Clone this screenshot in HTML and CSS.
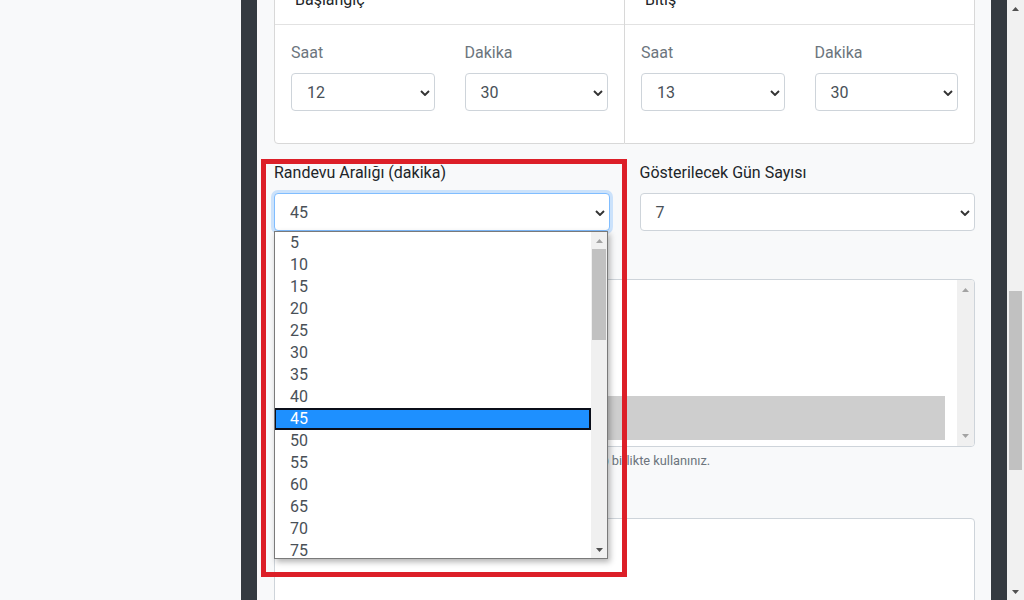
FILE: index.html
```html
<!DOCTYPE html>
<html lang="tr">
<head>
<meta charset="utf-8">
<title>Randevu Ayarları</title>
<link rel="stylesheet" href="styles.css">
</head>
<body>
<div class="app">
  <aside class="side"></aside>
  <div class="rail"></div>
  <main class="main">
    <div class="content">
      <div class="card-group">
        <div class="card">
          <div class="card-header">Başlangıç</div>
          <div class="card-body">
            <div class="row">
              <div class="col group">
                <label class="muted">Saat</label>
                <div class="select"><span>12</span><svg class="chev" width="10" height="6" viewBox="0 0 10 6"><path d="M1 1l4 4 4-4"/></svg></div>
              </div>
              <div class="col group">
                <label class="muted">Dakika</label>
                <div class="select"><span>30</span><svg class="chev" width="10" height="6" viewBox="0 0 10 6"><path d="M1 1l4 4 4-4"/></svg></div>
              </div>
            </div>
          </div>
        </div>
        <div class="card">
          <div class="card-header">Bitiş</div>
          <div class="card-body">
            <div class="row">
              <div class="col group">
                <label class="muted">Saat</label>
                <div class="select"><span>13</span><svg class="chev" width="10" height="6" viewBox="0 0 10 6"><path d="M1 1l4 4 4-4"/></svg></div>
              </div>
              <div class="col group">
                <label class="muted">Dakika</label>
                <div class="select"><span>30</span><svg class="chev" width="10" height="6" viewBox="0 0 10 6"><path d="M1 1l4 4 4-4"/></svg></div>
              </div>
            </div>
          </div>
        </div>
      </div>

      <div class="row wide">
        <div class="col group anchor">
          <label>Randevu Aralığı (dakika)</label>
          <div class="select-wrap">
            <div class="select focus"><span>45</span><svg class="chev" width="10" height="6" viewBox="0 0 10 6"><path d="M1 1l4 4 4-4"/></svg></div>
            <div class="listbox">
              <ul class="options">
                <li>5</li><li>10</li><li>15</li><li>20</li><li>25</li><li>30</li><li>35</li><li>40</li>
                <li class="sel">45</li>
                <li>50</li><li>55</li><li>60</li><li>65</li><li>70</li><li>75</li><li>80</li><li>85</li>
              </ul>
              <div class="lb-scroll">
                <div class="sb-btn"><svg width="7" height="4" viewBox="0 0 7 4"><path class="tri-off" d="M0 4L3.5 0 7 4z"/></svg></div>
                <div class="lb-thumb"></div>
                <div class="sb-fill"></div>
                <div class="sb-btn"><svg width="7" height="4" viewBox="0 0 7 4"><path class="tri-on" d="M0 0h7L3.5 4z"/></svg></div>
              </div>
            </div>
          </div>
          <div class="annot"></div>
        </div>
        <div class="col group">
          <label>Gösterilecek Gün Sayısı</label>
          <div class="select"><span>7</span><svg class="chev" width="10" height="6" viewBox="0 0 10 6"><path d="M1 1l4 4 4-4"/></svg></div>
        </div>
      </div>

      <div class="group">
        <label>Çalışma Günleri</label>
        <div class="multi">
          <ul class="multi-list">
            <li>Pazartesi</li><li>Salı</li><li>Çarşamba</li><li>Perşembe</li><li>Cuma</li>
            <li class="picked">Cumartesi</li><li class="picked">Pazar</li>
          </ul>
          <div class="ms-scroll">
            <svg width="7" height="4" viewBox="0 0 7 4"><path class="tri-off" d="M0 4L3.5 0 7 4z"/></svg>
            <svg width="7" height="4" viewBox="0 0 7 4"><path class="tri-off" d="M0 0h7L3.5 4z"/></svg>
          </div>
        </div>
        <small class="help">Birden çok gün seçmek için fare ile tıklarken de lütfen <b>(Ctrl)</b> birlikte kullanınız.</small>
      </div>

      <div class="group">
        <label>Açıklama</label>
        <div class="textarea"></div>
      </div>
    </div>
  </main>
  <div class="rail"></div>
  <div class="vscroll">
    <div class="sb-btn page"><svg width="7" height="4" viewBox="0 0 7 4"><path class="tri-on" d="M0 4L3.5 0 7 4z"/></svg></div>
    <div class="vs-thumb"></div>
    <div class="sb-fill"></div>
    <div class="sb-btn page"><svg width="7" height="4" viewBox="0 0 7 4"><path class="tri-on" d="M0 0h7L3.5 4z"/></svg></div>
  </div>
</div>
</body>
</html>
```

FILE: styles.css
```css
* { box-sizing: border-box; }
html, body { margin: 0; height: 100%; }
body {
  font-family: Roboto, "Segoe UI", sans-serif;
  font-size: 16px;
  line-height: 1.5;
  color: #212529;
  background: #f8f9fa;
  overflow: hidden;
}
.app { display: flex; height: 600px; overflow: hidden; }
.side { width: 241px; flex: none; background: #f8f9fa; }
.rail { width: 16px; flex: none; background: #343a40; }
.main { flex: 1; min-width: 0; background: #f8f9fa; padding: 0 16px 0 17px; }
.content { margin-top: -25px; }

/* cards */
.card-group { display: flex; margin-bottom: 17px; }
.card { flex: 1 1 0; min-width: 0; background: #fff; border: 1px solid #d8d8d8; }
.card:first-child { border-radius: 4px 0 0 4px; }
.card + .card { border-left: 0; border-radius: 0 4px 4px 0; }
.card-header { height: 49px; padding: 12px 20px; border-bottom: 1px solid #e2e2e2; background: #fff; color: #212529; }
.card-body { padding: 16px; }

.row { display: flex; margin: 0 -15px; }
.col { flex: 1 1 0; min-width: 0; padding: 0 15px; }

label { display: block; margin-bottom: 8px; }
.muted { color: #6c757d; }

.select {
  display: flex; align-items: center; justify-content: space-between;
  height: 38px; padding: 1px 4px 0 15px;
  border: 1px solid #ced4da; border-radius: 4px;
  background: #fff; color: #495057;
}
.chev { flex: none; }
.chev path { fill: none; stroke: #333; stroke-width: 1.9; }
.select.focus { border-color: #80bdff; box-shadow: 0 0 0 3px rgba(0, 123, 255, .18); }

.group { margin-bottom: 16px; }

/* open dropdown */
.anchor { position: relative; }
.select-wrap { position: relative; }
.listbox {
  position: absolute; top: 100%; left: 0; width: 334px; height: 328px; z-index: 4;
  display: flex; background: #fff;
  border: 1px solid #7a7a7a;
  box-shadow: 2px 3px 6px rgba(0, 0, 0, .3);
}
.options { flex: 1; margin: 0; padding: 0; list-style: none; overflow: hidden; color: #495057; }
.options li { height: 22px; line-height: 22px; padding-left: 15px; }
.options li.sel { background: #1e90ff; color: #fff; border: 2px solid #0b0f1a; line-height: 18px; padding-left: 14px; margin-left: -1px; }
.lb-scroll { width: 16px; flex: none; display: flex; flex-direction: column; background: #f0f0f0; }
.sb-btn { height: 17px; flex: none; display: flex; align-items: center; justify-content: center; }
.sb-fill { flex: 1; }
.lb-thumb { height: 91px; margin: 0 1px; background: #c1c1c1; }
.tri-off { fill: #a3a3a3; }
.tri-on { fill: #505050; }

/* annotation frame */
.annot {
  position: absolute; left: 2px; top: -2px; width: 366px; height: 418px; z-index: 5;
  border: 5px solid #dc1f28; pointer-events: none;
}

/* multi select */
.multi { display: flex; height: 168px; border: 1px solid #ced4da; border-radius: 4px; background: #fff; overflow: hidden; }
.multi-list { flex: 1; margin: 0; padding: 6px 12px; list-style: none; overflow: hidden; color: #495057; }
.multi-list li { height: 22px; line-height: 22px; }
.multi-list li.picked { background: #cecece; }
.ms-scroll { width: 17px; flex: none; background: #f0f0f0; display: flex; flex-direction: column; align-items: center; justify-content: space-between; padding: 8px 0 8px; }

.help { display: block; margin-top: 4px; font-size: 12.8px; line-height: 1.5; color: #6c757d; }
.help b { color: #212529; }

.textarea { height: 120px; border: 1px solid #ced4da; border-radius: 4px; background: #fff; }

/* page scrollbar */
.vscroll { width: 17px; flex: none; display: flex; flex-direction: column; background: #f1f1f1; }
.vs-thumb { height: 179px; margin: 274px 2px 0; background: #c1c1c1; }
```
